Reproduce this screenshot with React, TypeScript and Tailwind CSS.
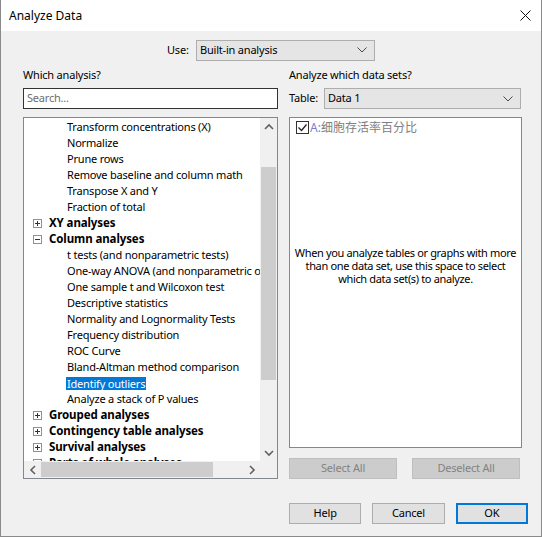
import React from "react";

const font = { fontFamily: '"Noto Sans", "Noto Sans CJK SC", sans-serif' };

function Chevron({ dir }: { dir: "up" | "down" | "left" | "right" }) {
  const pts: Record<string, string> = {
    up: "1,6 5,2 9,6",
    down: "1,2 5,6 9,2",
    left: "6,1 2,5 6,9",
    right: "2,1 6,5 2,9",
  };
  const horiz = dir === "left" || dir === "right";
  return (
    <svg width={horiz ? 8 : 10} height={horiz ? 10 : 8} viewBox={horiz ? "0 0 8 10" : "0 0 10 8"}>
      <polyline points={pts[dir]} fill="none" stroke="#606060" strokeWidth="1.6" />
    </svg>
  );
}

function SelectArrow() {
  return (
    <svg width="10" height="6" viewBox="0 0 10 6">
      <polyline points="0.5,0.5 5,5 9.5,0.5" fill="none" stroke="#4a4a4a" strokeWidth="1" />
    </svg>
  );
}

function Expander({ open }: { open: boolean }) {
  return (
    <span className="w-[9px] h-[9px] border border-[#919191] bg-white flex items-center justify-center relative">
      <span className="absolute w-[5px] h-px bg-[#333]" />
      {!open && <span className="absolute w-px h-[5px] bg-[#333]" />}
    </span>
  );
}

type Row = { text: string; kind: "leaf" | "group"; open?: boolean; selected?: boolean };

const rows: Row[] = [
  { text: "Transform concentrations (X)", kind: "leaf" },
  { text: "Normalize", kind: "leaf" },
  { text: "Prune rows", kind: "leaf" },
  { text: "Remove baseline and column math", kind: "leaf" },
  { text: "Transpose X and Y", kind: "leaf" },
  { text: "Fraction of total", kind: "leaf" },
  { text: "XY analyses", kind: "group", open: false },
  { text: "Column analyses", kind: "group", open: true },
  { text: "t tests (and nonparametric tests)", kind: "leaf" },
  { text: "One-way ANOVA (and nonparametric or mixed)", kind: "leaf" },
  { text: "One sample t and Wilcoxon test", kind: "leaf" },
  { text: "Descriptive statistics", kind: "leaf" },
  { text: "Normality and Lognormality Tests", kind: "leaf" },
  { text: "Frequency distribution", kind: "leaf" },
  { text: "ROC Curve", kind: "leaf" },
  { text: "Bland-Altman method comparison", kind: "leaf" },
  { text: "Identify outliers", kind: "leaf", selected: true },
  { text: "Analyze a stack of P values", kind: "leaf" },
  { text: "Grouped analyses", kind: "group", open: false },
  { text: "Contingency table analyses", kind: "group", open: false },
  { text: "Survival analyses", kind: "group", open: false },
  { text: "Parts of whole analyses", kind: "group", open: false },
];

function TreeRow({ row }: { row: Row }) {
  if (row.kind === "group") {
    return (
      <div className="h-[16px] flex items-center whitespace-nowrap">
        <div className="w-[9px] ml-[9px] mr-[7px] flex">
          <Expander open={!!row.open} />
        </div>
        <span className="font-bold text-black text-[11.5px] tracking-[-0.1px]">{row.text}</span>
      </div>
    );
  }
  return (
    <div className="h-[16px] flex items-center whitespace-nowrap pl-[42px]">
      <span
        className={
          row.selected
            ? "bg-[#0078d7] text-white px-[1px] h-[13px] leading-[13px] flex items-center"
            : "text-black px-[1px]"
        }
      >
        {row.text}
      </span>
    </div>
  );
}

function Button({
  label,
  width,
  disabled,
  primary,
}: {
  label: string;
  width: string;
  disabled?: boolean;
  primary?: boolean;
}) {
  const base = "h-[21px] flex items-center justify-center " + width;
  if (disabled) return <div className={base + " bg-[#cccccc] border border-[#bfbfbf] text-[#838383]"}>{label}</div>;
  if (primary) return <div className={base + " bg-[#e1e1e1] border-2 border-[#0078d7] text-black"}>{label}</div>;
  return <div className={base + " bg-[#e1e1e1] border border-[#adadad] text-black"}>{label}</div>;
}

export default function App() {
  return (
    <div
      className="w-[542px] h-[537px] bg-[#f0f0f0] border-l border-r border-b border-[#8a8a8a] flex flex-col text-[11px] tracking-[-0.2px] text-black overflow-hidden"
      style={font}
    >
      {/* title bar */}
      <div className="h-[31px] bg-white flex items-center justify-between pl-[8px] pr-[10px] shrink-0">
        <span className="text-[12px] tracking-normal text-black">Analyze Data</span>
        <svg width="11" height="11" viewBox="0 0 11 11">
          <path d="M0.5 0.5 L10.5 10.5 M10.5 0.5 L0.5 10.5" stroke="#111" strokeWidth="1" />
        </svg>
      </div>

      {/* analysis source */}
      <div className="h-[20px] mt-[9px] flex items-center pl-[166px]">
        <span className="w-[24px]">Use:</span>
        <div className="ml-[5px] w-[179px] h-[21px] bg-[#e5e5e5] border border-[#adadad] flex items-center justify-between pl-[3px] pr-[7px]">
          <span>Built-in analysis</span>
          <SelectArrow />
        </div>
      </div>

      <div className="flex mt-[7px] pl-[21px]">
        {/* left column */}
        <div className="w-[256px] flex flex-col">
          <div className="h-[16px] ml-[1px] flex items-center">Which analysis?</div>
          <div className="mt-[5px] h-[21px] ml-[1px] w-[255px] bg-white border border-[#333] flex items-center pl-[3px] text-[#6d6d6d]">
            Search...
          </div>
          <div className="mt-[8px] ml-[1px] w-[255px] h-[362px] bg-white border border-[#828790] flex flex-col">
            <div className="flex h-[343px]">
              <div className="flex-1 overflow-hidden pt-[1px]">
                {rows.map((r) => (
                  <TreeRow key={r.text} row={r} />
                ))}
              </div>
              {/* vertical scrollbar */}
              <div className="w-[17px] bg-[#f0f0f0] flex flex-col">
                <div className="h-[17px] flex items-center justify-center">
                  <Chevron dir="up" />
                </div>
                <div className="h-[32px]" />
                <div className="h-[213px] mx-[1px] bg-[#cdcdcd]" />
                <div className="flex-1" />
                <div className="h-[17px] flex items-center justify-center">
                  <Chevron dir="down" />
                </div>
              </div>
            </div>
            {/* horizontal scrollbar */}
            <div className="flex h-[17px]">
              <div className="flex-1 bg-[#f0f0f0] flex items-center">
                <div className="w-[17px] flex justify-center">
                  <Chevron dir="left" />
                </div>
                <div className="w-[172px] h-[15px] bg-[#cdcdcd]" />
                <div className="flex-1" />
                <div className="w-[17px] flex justify-center">
                  <Chevron dir="right" />
                </div>
              </div>
              <div className="w-[17px] bg-[#f0f0f0]" />
            </div>
          </div>
        </div>

        {/* right column */}
        <div className="ml-[10px] w-[240px] flex flex-col">
          <div className="h-[16px] ml-[1px] flex items-center">Analyze which data sets?</div>
          <div className="mt-[5px] h-[21px] ml-[1px] flex items-center">
            <span className="w-[35px]">Table:</span>
            <div className="w-[197px] h-[21px] bg-[#e5e5e5] border border-[#adadad] flex items-center justify-between pl-[3px] pr-[7px]">
              <span>Data 1</span>
              <SelectArrow />
            </div>
          </div>
          <div className="mt-[8px] ml-[1px] w-[233px] h-[331px] bg-white border border-[#828790] flex flex-col">
            <div className="flex items-center h-[15px] mt-[2px] pl-[6px] whitespace-nowrap">
              <span className="w-[13px] h-[13px] border border-[#333] bg-white flex items-center justify-center">
                <svg width="11" height="11" viewBox="0 0 11 11">
                  <polyline points="1.5,5.5 4.5,8.5 9.5,2.5" fill="none" stroke="#222" strokeWidth="1.3" />
                </svg>
              </span>
              <span className="ml-[1px] text-[#7b7bd0] text-[12px] tracking-normal">A:</span>
              <span className="text-[#808080] text-[12px] tracking-normal">细胞存活率百分比</span>
            </div>
            <div className="mt-[111px] text-center leading-[13px] tracking-[-0.35px] text-black whitespace-nowrap">
              When you analyze tables or graphs with more
              <br />
              than one data set, use this space to select
              <br />
              which data set(s) to analyze.
            </div>
          </div>
          <div className="mt-[10px] ml-[1px] flex gap-[15px]">
            <Button label="Select All" width="w-[108px]" disabled />
            <Button label="Deselect All" width="w-[108px]" disabled />
          </div>
          <div className="mt-[24px] ml-[1px] flex gap-[11px]">
            <Button label="Help" width="w-[73px]" />
            <Button label="Cancel" width="w-[73px]" />
            <Button label="OK" width="w-[73px]" primary />
          </div>
        </div>
      </div>
    </div>
  );
}
